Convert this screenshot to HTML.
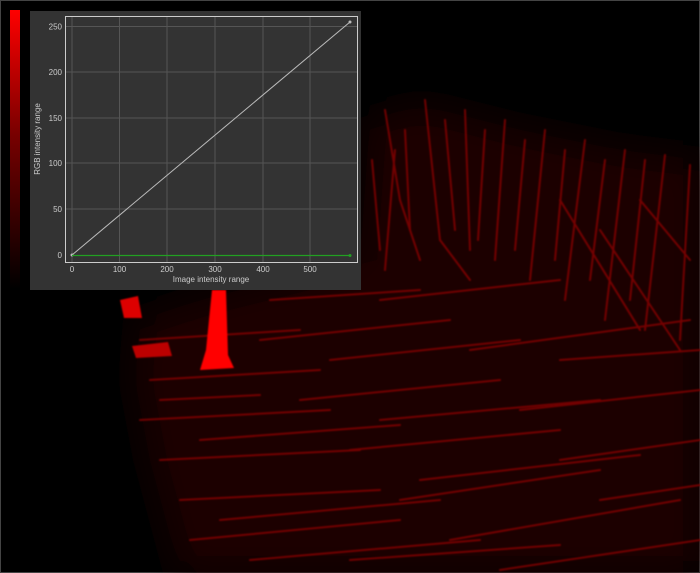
<!DOCTYPE html>
<html><head><meta charset="utf-8"><style>
html,body{margin:0;padding:0;background:#000;width:700px;height:573px;overflow:hidden;font-family:"Liberation Sans",sans-serif}
</style></head><body>
<svg width="700" height="573" style="position:absolute;left:0;top:0">
<defs>
<filter id="b" x="-20%" y="-20%" width="140%" height="140%"><feGaussianBlur stdDeviation="18"/></filter>
<filter id="s"><feGaussianBlur stdDeviation="0.8"/></filter>
<linearGradient id="cb" x1="0" y1="0" x2="0" y2="1"><stop offset="0" stop-color="#f00"/><stop offset="0.45" stop-color="#700"/><stop offset="1" stop-color="#000"/></linearGradient>
</defs>
<rect x="0.5" y="0.5" width="699" height="572" fill="none" stroke="#444"/>
<path d="M370 120 L420 105 L520 130 L620 150 L700 160 L700 573 L180 573 L150 460 L135 380 L140 320 L200 300 L360 260 Z" fill="#1c0000" filter="url(#b)"/>
<g stroke="#8a0000" stroke-width="2" stroke-linecap="round" fill="none" filter="url(#s)" opacity="0.8">
<path d="M385 110 L400 200 L420 260"/><path d="M405 130 L410 230"/><path d="M425 100 L440 240"/><path d="M445 120 L455 230"/><path d="M465 110 L470 250"/><path d="M485 130 L478 240"/><path d="M505 120 L495 260"/><path d="M525 140 L515 250"/><path d="M545 130 L530 280"/><path d="M565 150 L555 260"/><path d="M585 140 L565 300"/><path d="M605 160 L590 280"/><path d="M625 150 L605 320"/><path d="M645 160 L630 300"/><path d="M665 155 L645 330"/><path d="M690 165 L680 340"/><path d="M372 160 L380 250"/><path d="M395 150 L385 270"/>
<path d="M560 200 L640 330"/><path d="M440 240 L470 280"/><path d="M600 230 L680 350"/><path d="M640 200 L690 260"/>
<path d="M140 340 L300 330"/><path d="M260 340 L450 320"/><path d="M150 380 L320 370"/><path d="M300 400 L500 380"/><path d="M140 420 L330 410"/><path d="M160 460 L360 450"/><path d="M350 450 L560 430"/><path d="M180 500 L380 490"/><path d="M400 500 L600 470"/><path d="M190 540 L400 520"/><path d="M450 540 L680 500"/><path d="M380 300 L560 280"/><path d="M470 350 L690 320"/><path d="M520 410 L700 390"/><path d="M560 460 L700 440"/><path d="M250 560 L480 540"/><path d="M500 570 L700 540"/>
<path d="M270 300 L420 290"/><path d="M330 360 L520 340"/><path d="M200 440 L400 425"/><path d="M380 420 L600 400"/><path d="M220 520 L440 500"/><path d="M420 480 L640 455"/><path d="M560 360 L700 350"/><path d="M600 500 L700 485"/><path d="M160 400 L260 395"/><path d="M350 560 L560 545"/>
</g>
<path d="M120 300 L138 296 L142 318 L124 318 Z" fill="#d00" filter="url(#s)"/>
<path d="M212 290 L226 290 L228 355 L234 368 L200 370 L206 350 Z" fill="#f00" filter="url(#s)"/>
<path d="M132 346 L168 342 L172 356 L136 358 Z" fill="#b00" filter="url(#s)"/>
<rect x="10" y="10" width="10" height="279" fill="url(#cb)"/>
<rect x="30" y="11" width="331" height="279" fill="#333"/>
<g stroke="#555" stroke-width="1">
<line x1="72" y1="16" x2="72" y2="262"/><line x1="119.5" y1="16" x2="119.5" y2="262"/><line x1="167" y1="16" x2="167" y2="262"/><line x1="215" y1="16" x2="215" y2="262"/><line x1="263" y1="16" x2="263" y2="262"/><line x1="310" y1="16" x2="310" y2="262"/>
<line x1="65" y1="26.5" x2="357" y2="26.5"/><line x1="65" y1="72" x2="357" y2="72"/><line x1="65" y1="118" x2="357" y2="118"/><line x1="65" y1="163" x2="357" y2="163"/><line x1="65" y1="209" x2="357" y2="209"/>
</g>
<rect x="65.5" y="16.5" width="292" height="246" fill="none" stroke="#ccc" stroke-width="1"/>
<line x1="72" y1="255" x2="350" y2="22" stroke="#bbb" stroke-width="1"/>
<circle cx="72" cy="255" r="1.5" fill="#bbb"/><circle cx="350" cy="22" r="1.5" fill="#bbb"/>
<line x1="72" y1="255.5" x2="350" y2="255.5" stroke="#22a022" stroke-width="1.3"/>
<circle cx="350" cy="255.5" r="1.5" fill="#22a022"/>
<g fill="#ccc" font-size="8" font-family="Liberation Sans, sans-serif">
<g text-anchor="end"><text x="62" y="29.5">250</text><text x="62" y="75">200</text><text x="62" y="121">150</text><text x="62" y="166">100</text><text x="62" y="212">50</text><text x="62" y="258">0</text></g>
<g text-anchor="middle"><text x="72" y="272">0</text><text x="119.5" y="272">100</text><text x="167" y="272">200</text><text x="215" y="272">300</text><text x="263" y="272">400</text><text x="310" y="272">500</text>
<text x="211" y="282">Image intensity range</text>
<text transform="translate(40,139) rotate(-90)">RGB intensity range</text></g>
</g>
</svg>
</body></html>
